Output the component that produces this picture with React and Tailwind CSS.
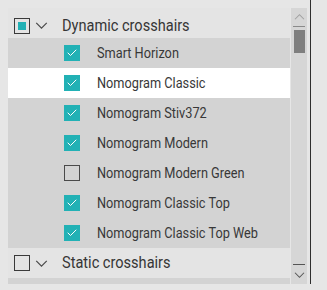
import { Check } from "lucide-react";

const items = [
  { label: "Smart Horizon", checked: true },
  { label: "Nomogram Classic", checked: true, selected: true },
  { label: "Nomogram Stiv372", checked: true },
  { label: "Nomogram Modern", checked: true },
  { label: "Nomogram Modern Green", checked: false },
  { label: "Nomogram Classic Top", checked: true },
  { label: "Nomogram Classic Top Web", checked: true },
];

function Chevron({ up, className }) {
  return (
    <svg viewBox="0 0 14 8" className={className} fill="none" stroke="currentColor" strokeWidth="1.4">
      <path d={up ? "M1 7 7 1l6 6" : "M1 1l6 6 6-6"} />
    </svg>
  );
}

function GroupRow({ label, partial, first }) {
  return (
    <div className={`flex h-[30px] shrink-0 items-center bg-[#e4e4e4] pl-[6px] ${first ? "pt-[5px]" : ""}`}>
      <div className="flex h-[16px] w-[16px] items-center justify-center border-[1.5px] border-[#3a3a3a]">
        {partial && <div className="h-[8px] w-[8px] bg-[#22b1b5]" />}
      </div>
      <Chevron className="ml-[5px] h-[7px] w-[13px] text-[#4a4a4a]" />
      <span className="ml-[14px] inline-block origin-left scale-x-[0.91] text-[16px] text-[#363636]">
        {label}
      </span>
    </div>
  );
}

function ItemRow({ label, checked, selected }) {
  return (
    <div
      className={`flex h-[30px] shrink-0 items-center pl-[56px] ${selected ? "bg-white" : "bg-[#d3d3d3]"}`}
    >
      {checked ? (
        <div className="flex h-[16px] w-[16px] items-center justify-center bg-[#22b1b5]">
          <Check className="h-[12px] w-[12px] text-white" strokeWidth={2} />
        </div>
      ) : (
        <div className="h-[16px] w-[16px] border border-[#4a4a4a]" />
      )}
      <span className="ml-[17px] inline-block origin-left scale-x-[0.91] text-[14px] text-[#383838]">
        {label}
      </span>
    </div>
  );
}

export default function App() {
  return (
    <div
      className="flex h-[290px] w-[327px] bg-[#e6e6e6]"
      style={{ fontFamily: "Roboto, 'Liberation Sans', sans-serif" }}
    >
      <div className="mt-[8px] ml-[8px] flex h-[276px] w-[282px] flex-col overflow-hidden">
        <GroupRow label="Dynamic crosshairs" partial first />
        {items.map((it) => (
          <ItemRow key={it.label} {...it} />
        ))}
        <GroupRow label="Static crosshairs" />
        <div className="h-[30px] shrink-0 bg-[#d3d3d3]" />
      </div>
      <div className="mt-[8px] ml-[1px] flex h-[276px] w-[16px] flex-col items-center bg-[#d6d6d6]">
        <div className="flex h-[19px] w-[12px] flex-col items-center justify-center border-b border-[#8a8a8a]">
          <Chevron up className="h-[6px] w-[11px] text-[#a0a0a0]" />
        </div>
        <div className="mt-[3px] h-[23px] w-[11px] bg-[#7f7f7f]" />
        <div className="flex-1" />
        <div className="flex h-[20px] w-[12px] flex-col items-center justify-center border-t border-[#555]">
          <Chevron className="h-[6px] w-[11px] text-[#555]" />
        </div>
      </div>
      <div className="ml-[3px] h-[284px] w-[1px] bg-[#2e2e2e]" />
    </div>
  );
}
